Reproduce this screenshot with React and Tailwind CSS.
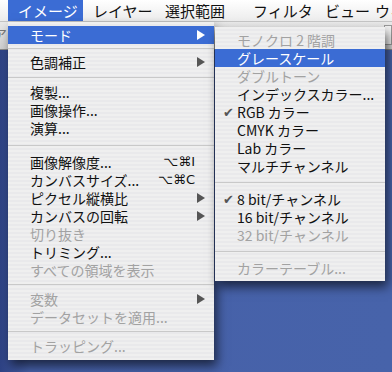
import React from 'react'

const JP = "font-['Lucida_Grande','Noto_Sans_CJK_JP','DejaVu_Sans',sans-serif]"

const mainItems = [
  { label: 'モード', arrow: true, active: true },
  { sep: 'h-[9px]' },
  { label: '色調補正', arrow: true },
  { sep: 'h-[12px]' },
  { label: '複製...' },
  { label: '画像操作...' },
  { label: '演算...' },
  { sep: 'h-[16px]' },
  { label: '画像解像度...', key: '⌥⌘I' },
  { label: 'カンバスサイズ...', key: '⌥⌘C' },
  { label: 'ピクセル縦横比', arrow: true },
  { label: 'カンバスの回転', arrow: true },
  { label: '切り抜き', off: true },
  { label: 'トリミング...' },
  { label: 'すべての領域を表示', off: true },
  { sep: 'h-[11px]' },
  { label: '変数', arrow: true, off: true },
  { label: 'データセットを適用...', off: true },
  { sep: 'h-[11px]' },
  { label: 'トラッピング...', off: true },
]

const subItems = [
  { label: 'モノクロ 2 階調', off: true },
  { label: 'グレースケール', active: true },
  { label: 'ダブルトーン', off: true },
  { label: 'インデックスカラー...' },
  { label: 'RGB カラー', check: true },
  { label: 'CMYK カラー' },
  { label: 'Lab カラー' },
  { label: 'マルチチャンネル' },
  { sep: 'h-[15px]' },
  { label: '8 bit/チャンネル', check: true },
  { label: '16 bit/チャンネル' },
  { label: '32 bit/チャンネル', off: true },
  { sep: 'h-[15px]' },
  { label: 'カラーテーブル...', off: true },
]

function Arrow({ white }) {
  return (
    <svg width="8" height="10" viewBox="0 0 8 10" className="shrink-0">
      <path d="M0 0 L8 5 L0 10 Z" fill={white ? '#ffffff' : '#555555'} />
    </svg>
  )
}

function Row({ it }) {
  if (it.sep) {
    return (
      <div className={`${it.sep} flex items-center`}>
        <div className="h-px w-full bg-[#c9c9c9]" />
      </div>
    )
  }
  const color = it.active ? 'text-white' : it.off ? 'text-[#a2a2a2]' : 'text-[#111]'
  return (
    <div className={`relative h-[18px] flex items-center pl-[22px] pr-[9px] ${it.active ? 'bg-[#3b6cd4]' : ''}`}>
      {it.check && <span className="absolute left-[8px] top-0 leading-[18px] text-[13px] text-[#555]">✔</span>}
      <span className={`flex-1 text-[14px] leading-[18px] whitespace-nowrap ${color}`}>{it.label}</span>
      {it.key && <span className="mr-[10px] text-[13px] leading-[18px] text-[#111] font-['DejaVu_Sans',sans-serif]">{it.key}</span>}
      {it.arrow && <Arrow white={it.active} />}
    </div>
  )
}

export default function App() {
  const bar = [
    { t: 'イメージ', w: 'w-[75px]', active: true },
    { t: 'レイヤー', w: 'w-[72px]' },
    { t: '選択範囲', w: 'w-[88px]' },
    { t: 'フィルタ', w: 'w-[72px]' },
    { t: 'ビュー', w: 'w-[50px]' },
    { t: 'ウィンドウ', w: 'w-[80px]' },
  ]
  return (
    <div className={`relative w-[392px] h-[372px] overflow-hidden bg-[linear-gradient(90deg,#2e4284_0px,#4660a8_30px,#4763aa_100%)] ${JP}`}>
      <div className="h-[22px] flex pl-[8px] bg-[linear-gradient(180deg,#ffffff,#ececec)] border-b border-[#c4c4c4] whitespace-nowrap">
        {bar.map(b => (
          <div key={b.t} className={`${b.w} shrink-0 pl-[10px] text-[15px] leading-[21px] ${b.active ? 'bg-[#3b6cd4] text-white' : 'text-[#111]'}`}>{b.t}</div>
        ))}
      </div>
      <div className="h-[28px] bg-[linear-gradient(180deg,#e9e9e9,#cfcfcf)] border-b border-[#8a8a8a] flex items-start">
        <span className="-ml-[7px] mt-[2px] text-[14px] text-[#777]">ア</span>
        <div className="ml-auto mt-[3px] h-[20px] w-[8px] border border-[#999] bg-[#f2f2f2]" />
      </div>

      <div className="absolute left-[8px] top-[22px] w-[206px] pt-[4px] pb-[5px] bg-[repeating-linear-gradient(180deg,#efefef_0px,#efefef_2px,#e9e9eb_2px,#e9e9eb_4px)] shadow-[3px_6px_10px_rgba(0,0,0,0.6)]">
        {mainItems.map((it, i) => <Row key={i} it={it} />)}
      </div>

      <div className="absolute left-[215px] top-[27px] w-[170px] pt-[4px] pb-[4px] bg-[repeating-linear-gradient(180deg,#efefef_0px,#efefef_2px,#e9e9eb_2px,#e9e9eb_4px)] shadow-[3px_6px_10px_rgba(0,0,0,0.6)]">
        {subItems.map((it, i) => <Row key={i} it={it} />)}
      </div>
    </div>
  )
}
